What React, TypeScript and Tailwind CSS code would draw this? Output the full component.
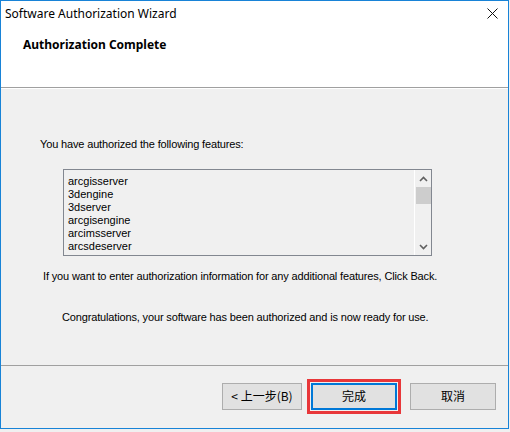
import React from "react";

const features = [
  "arcgisserver",
  "3dengine",
  "3dserver",
  "arcgisengine",
  "arcimsserver",
  "arcsdeserver",
];

const uiFont = { fontFamily: '"Noto Sans", "Noto Sans CJK SC", sans-serif' };
const dlgFont = { fontFamily: '"Liberation Sans", Arial, sans-serif' };
const cjkFont = { fontFamily: '"Noto Sans CJK SC", "Noto Sans", sans-serif' };

function Chevron({ up }: { up?: boolean }) {
  return (
    <svg width="9" height="6" viewBox="0 0 9 6" className="block">
      <path
        d={up ? "M1 5 L4.5 1.5 L8 5" : "M1 1 L4.5 4.5 L8 1"}
        fill="none"
        stroke="#606060"
        strokeWidth="1.6"
      />
    </svg>
  );
}

function WizardButton({ label, primary }: { label: string; primary?: boolean }) {
  return (
    <button
      className={`w-full h-[27px] bg-[#e1e1e1] text-[12px] text-black flex items-center justify-center whitespace-nowrap ${
        primary ? "border-2 border-[#0078d7]" : "border border-[#adadad]"
      }`}
      style={cjkFont}
    >
      {label}
    </button>
  );
}

export default function App() {
  return (
    <div className="w-[510px] h-[432px] bg-[#f0f0f0] overflow-hidden">
      <div className="w-[509px] h-[429px] border border-[#1883d7] flex flex-col">
        {/* title bar + page header */}
        <div className="bg-white h-[86px] flex flex-col">
          <div className="h-[25px] flex items-center justify-between pl-[4px] pr-[10px]">
            <span className="text-[12px] text-black" style={uiFont}>
              Software Authorization Wizard
            </span>
            <svg width="11" height="11" viewBox="0 0 11 11">
              <path d="M0.5 0.5 L10.5 10.5 M10.5 0.5 L0.5 10.5" stroke="#111" strokeWidth="1" />
            </svg>
          </div>
          <div className="pl-[22px] pt-[5px]">
            <span className="text-[12px] font-bold text-black" style={uiFont}>
              Authorization Complete
            </span>
          </div>
        </div>
        <div className="h-px bg-[#a0a0a0]" />
        <div className="h-px bg-white" />

        {/* body */}
        <div
          className="flex-1 flex flex-col text-[11px] leading-[13px] tracking-[-0.15px] text-black"
          style={dlgFont}
        >
          <div className="pl-[39px] pt-[49px]">You have authorized the following features:</div>

          <div className="ml-[62px] mt-[18px] w-[369px] h-[87px] border border-[#828790] bg-[#f0f0f0] flex">
            <div className="flex-1 pl-[4px] pt-[5px] tracking-normal">
              {features.map((f) => (
                <div key={f} className="h-[13px]">
                  {f}
                </div>
              ))}
            </div>
            <div className="w-[17px] border-l border-white flex flex-col items-center">
              <div className="h-[17px] flex items-center justify-center">
                <Chevron up />
              </div>
              <div className="w-[15px] h-[17px] bg-[#cdcdcd]" />
              <div className="flex-1" />
              <div className="h-[17px] flex items-center justify-center">
                <Chevron />
              </div>
            </div>
          </div>

          <div className="pl-[42px] mt-[14px]">
            If you want to enter authorization information for any additional features, Click Back.
          </div>
          <div className="pl-[61px] mt-[28px]">
            Congratulations, your software has been authorized and is now ready for use.
          </div>
        </div>

        <div className="h-px bg-[#a0a0a0]" />

        {/* button row */}
        <div className="h-[62px] flex items-center justify-end pr-[12px] pb-[2px]">
          <div className="w-[80px]">
            <WizardButton label="< 上一步(B)" />
          </div>
          <div className="ml-[5px] w-[94px] border-[3px] border-[#e8373a] p-px">
            <WizardButton label="完成" primary />
          </div>
          <div className="ml-[9px] w-[86px]">
            <WizardButton label="取消" />
          </div>
        </div>
      </div>
    </div>
  );
}
